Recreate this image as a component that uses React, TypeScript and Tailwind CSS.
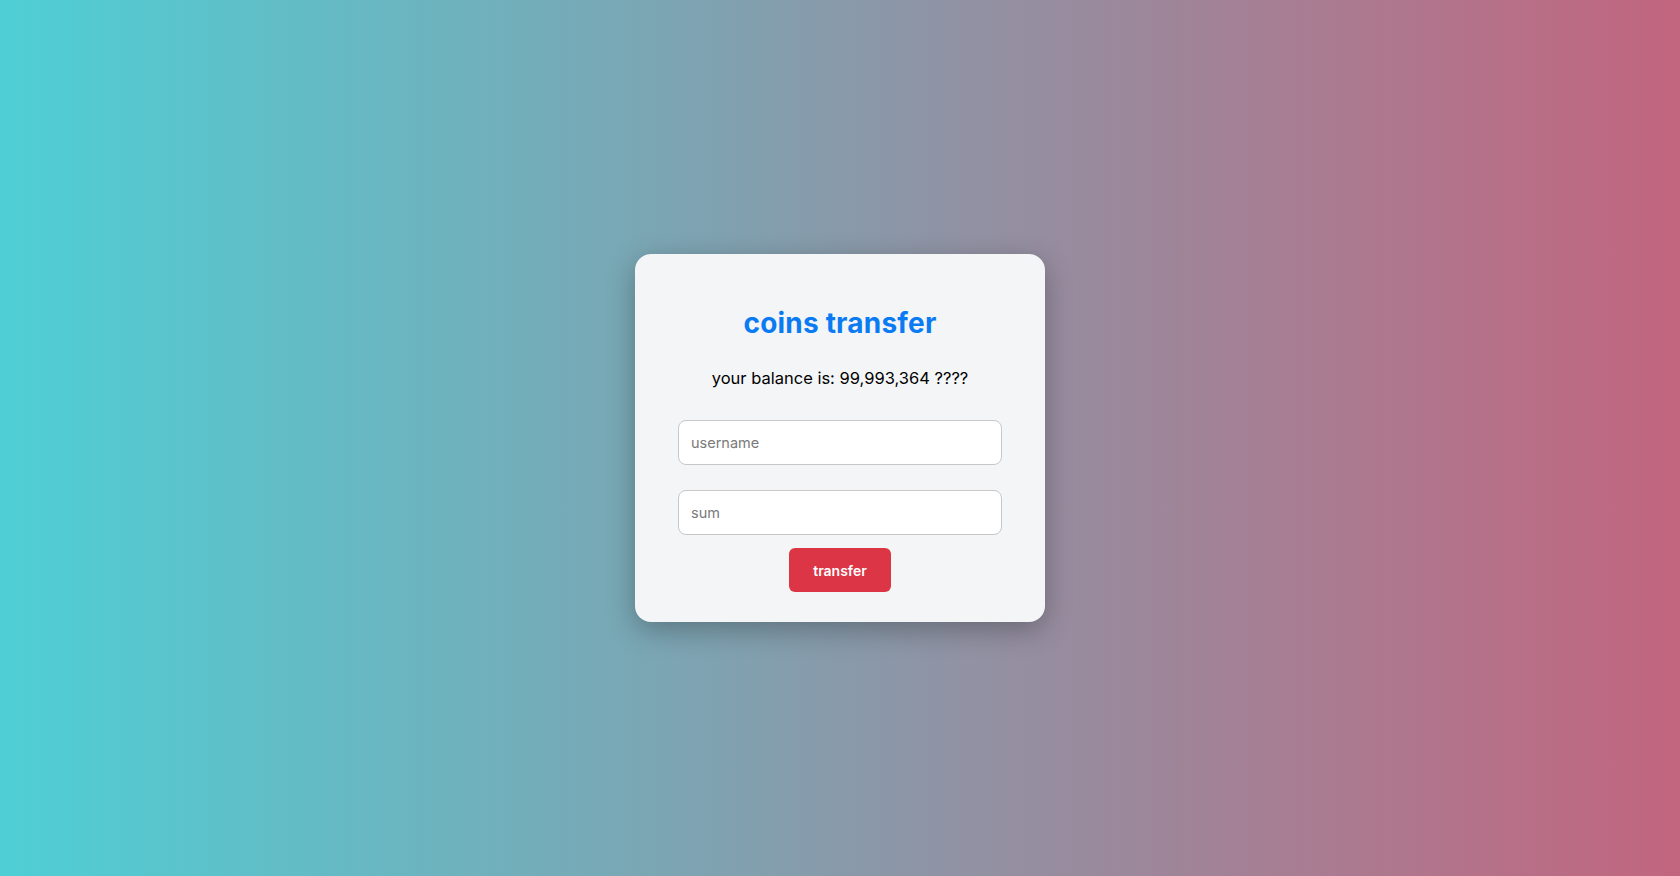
export default function App() {
  return (
    <div className="w-full h-[876px] flex items-center justify-center bg-[linear-gradient(to_right,#4ecfd5,#c2657f)] font-[Inter,'Open_Sans',sans-serif]">
      <div className="w-[410px] bg-[#f4f5f7] rounded-[16px] shadow-[0_8px_28px_rgba(0,0,0,0.28)] px-[43px] pt-[52px] pb-[30px] flex flex-col items-center">
        <h1 className="text-[28px] leading-[34px] font-bold text-[#0a7bf2] tracking-[0.2px]">
          coins transfer
        </h1>
        <p className="mt-[27px] text-[16.5px] leading-[22px] text-black">
          your balance is: 99,993,364 ????
        </p>
        <input
          className="mt-[31px] w-full h-[45px] rounded-[8px] border border-[#c8c8c8] bg-white px-[12px] text-[14.5px] placeholder:text-[#7a7a7a] outline-none"
          placeholder="username"
        />
        <input
          className="mt-[25px] w-full h-[45px] rounded-[8px] border border-[#c8c8c8] bg-white px-[12px] text-[14.5px] placeholder:text-[#7a7a7a] outline-none"
          placeholder="sum"
        />
        <button className="mt-[13px] w-[102px] h-[44px] rounded-[6px] bg-[#dc3545] text-white text-[14px] font-semibold">
          transfer
        </button>
      </div>
    </div>
  );
}
